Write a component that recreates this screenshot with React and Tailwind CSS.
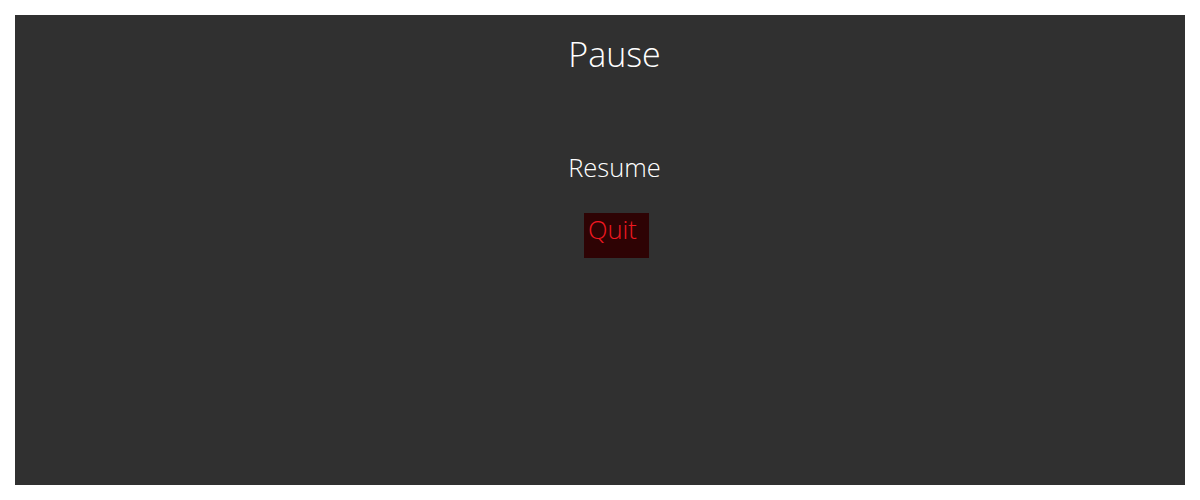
export default function App() {
  return (
    <div className="w-[1200px] h-[500px] bg-white p-[15px]">
      <div
        className="w-full h-full bg-[#303030] flex flex-col items-center pl-[29px] pt-[15px] font-light"
        style={{ fontFamily: '"Open Sans", sans-serif' }}
      >
        <h1 className="text-[34px] leading-[48px] text-white">Pause</h1>
        <button className="mt-[71px] text-[25.5px] leading-[36px] text-white">Resume</button>
        <button className="mt-[28px] ml-[4px] w-[65px] h-[45px] bg-[#2e0304] text-[#f01820] text-[25.5px] leading-[32px] text-left pl-[4px] flex items-start">
          Quit
        </button>
      </div>
    </div>
  );
}
